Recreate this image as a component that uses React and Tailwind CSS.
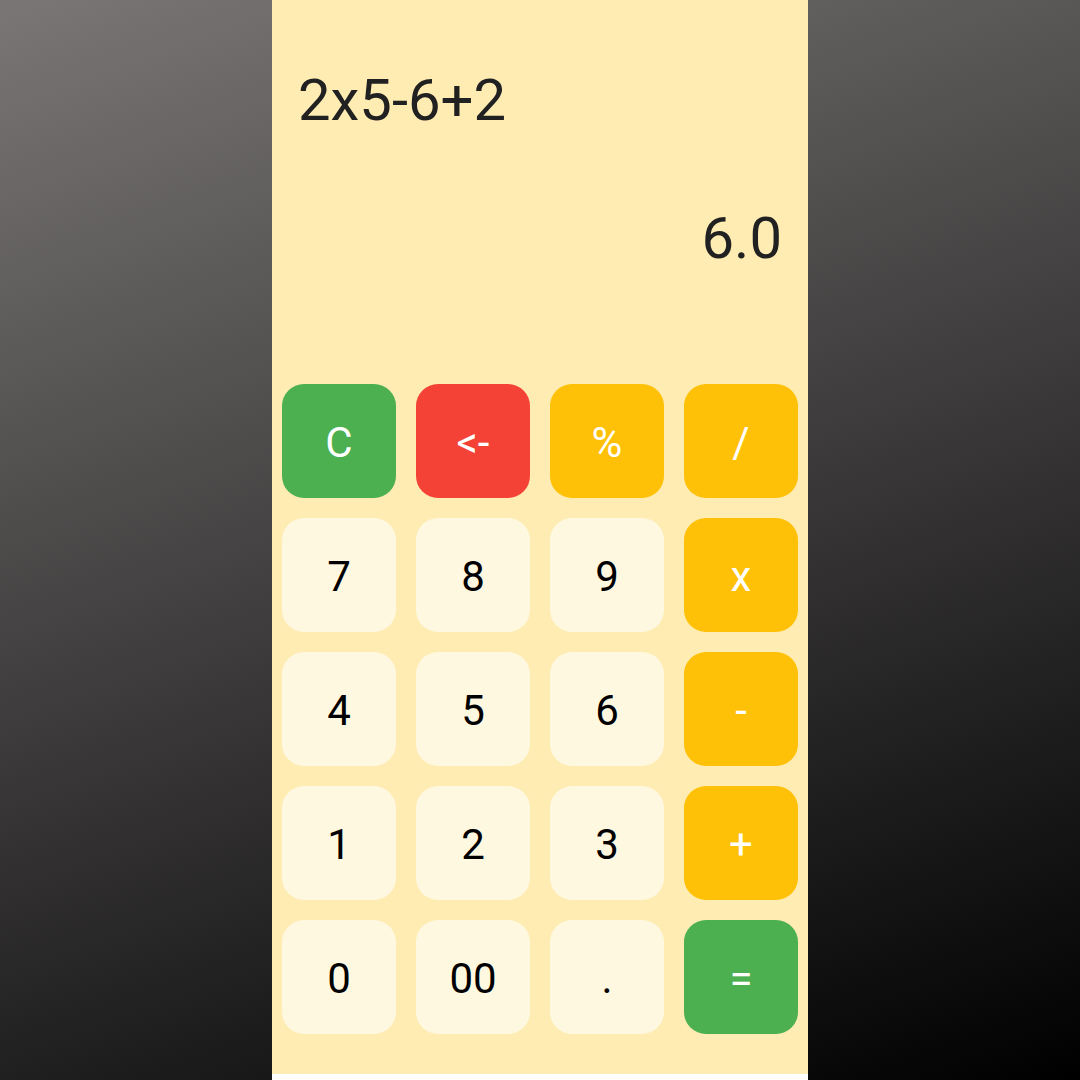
const keys = [
  { label: "C", kind: "clear" },
  { label: "<-", kind: "back" },
  { label: "%", kind: "op" },
  { label: "/", kind: "op" },
  { label: "7", kind: "num" },
  { label: "8", kind: "num" },
  { label: "9", kind: "num" },
  { label: "x", kind: "op" },
  { label: "4", kind: "num" },
  { label: "5", kind: "num" },
  { label: "6", kind: "num" },
  { label: "-", kind: "op" },
  { label: "1", kind: "num" },
  { label: "2", kind: "num" },
  { label: "3", kind: "num" },
  { label: "+", kind: "op" },
  { label: "0", kind: "num" },
  { label: "00", kind: "num" },
  { label: ".", kind: "num" },
  { label: "=", kind: "equals" },
];

const styles = {
  clear: "bg-[#4caf50] text-white",
  back: "bg-[#f44336] text-white",
  op: "bg-[#ffc107] text-white",
  equals: "bg-[#4caf50] text-white",
  num: "bg-[#fff8e1] text-black",
};

export default function App() {
  return (
    <div
      className="flex h-[1080px] w-[1080px] justify-center bg-[linear-gradient(160deg,#7a7676,#000000)]"
      style={{ fontFamily: "Roboto, 'Noto Sans', sans-serif" }}
    >
      <div className="flex w-[536px] flex-col bg-white">
        <div className="flex h-[1074px] flex-col bg-[#ffecb3] px-[10px]">
          <div className="mt-[66px] pl-[16px] text-[58px] leading-[68px] text-[#212121]">2x5-6+2</div>
          <div className="mt-[70px] pr-[16px] text-right text-[58px] leading-[68px] text-[#212121]">6.0</div>

          <div className="mt-[112px] grid grid-cols-4 gap-[20px]">
            {keys.map((key) => (
              <button
                key={key.label}
                className={`flex h-[114px] items-center justify-center rounded-[22px] pt-[4px] text-[42px] leading-none ${styles[key.kind]}`}
              >
                {key.label}
              </button>
            ))}
          </div>
        </div>
      </div>
    </div>
  );
}
